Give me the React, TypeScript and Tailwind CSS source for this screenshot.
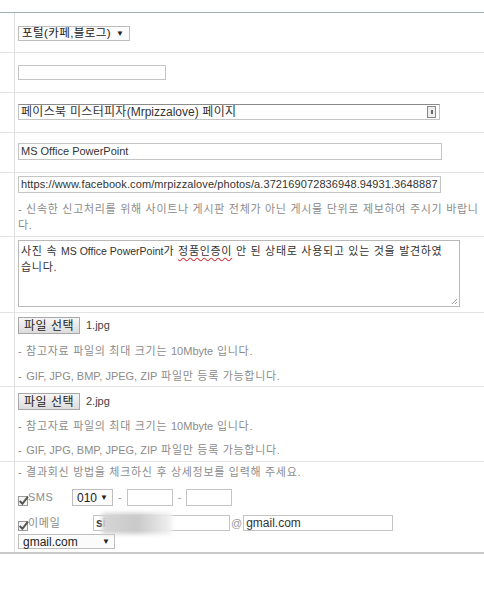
import React from "react";

const font = "font-['Liberation_Sans','Noto_Sans_CJK_KR',sans-serif]";

const Row = ({ h, last, children }: any) => (
  <div className={`flex ${h} ${last ? "" : "border-b border-[#e2e4e4]"}`}>
    <div className="w-[15px] shrink-0 border-r border-[#dcdfdf]" />
    <div className="flex-1 pl-[3px]">{children}</div>
  </div>
);

const Hint = ({ children, className = "" }: any) => (
  <p className={`text-[11px] leading-[16px] tracking-[0.7px] text-[#8c8c8c] ${className}`}>{children}</p>
);

// latin runs keep normal spacing, korean runs are spread a little wider
const L = ({ children, className = "" }: any) => <span className={`tracking-normal ${className}`}>{children}</span>;

const Arrow = () => <span className="text-[8px] leading-none tracking-normal text-[#222]">▼</span>;

const Check = () => (
  <span className="relative inline-block h-[10px] w-[10px] border border-[#9a9a9a] bg-[#f4f4f4]">
    <svg viewBox="0 0 10 10" className="absolute -left-[1px] -top-[2px] h-[11px] w-[11px]">
      <path d="M1.5 5.5 L4 8 L9 1.5" fill="none" stroke="#555" strokeWidth="1.8" />
    </svg>
  </span>
);

const FileButton = ({ name }: any) => (
  <div className="flex items-center gap-[6px]">
    <div className="flex h-[17px] w-[62px] items-center justify-center border border-[#a8a8a8] bg-gradient-to-b from-[#f6f6f6] to-[#dcdcdc] text-[12px] tracking-[0.5px] text-[#222]">
      파일 선택
    </div>
    <span className="text-[11px] text-[#444]">{name}</span>
  </div>
);

const Input = ({ className = "", children }: any) => (
  <div className={`flex items-center border border-[#c4c4c4] bg-white px-[2px] text-[11px] text-[#333] ${className}`}>
    {children}
  </div>
);

export default function App() {
  return (
    <div className={`h-[590px] w-[484px] bg-white ${font}`}>
      <div className="h-[12px]" />
      <div className="border-t border-[#9fb0b0] border-b-2 border-b-[#c8c8c8]">
        <Row h="h-[40px]">
          <div className="pt-[13px]">
            <div className="flex h-[15px] w-[112px] items-center justify-between border border-[#bdbdbd] bg-[#fbfbfb] pl-[3px] pr-[5px] text-[11.5px] tracking-[0.4px] text-[#222]">
              <span>포털(카페,블로그)</span>
              <Arrow />
            </div>
          </div>
        </Row>
        <Row h="h-[40px]">
          <div className="pt-[12px]">
            <Input className="h-[15px] w-[148px]" />
          </div>
        </Row>
        <Row h="h-[40px]">
          <div className="pt-[11px]">
            <Input className="h-[16px] w-[422px] justify-between border-t-[#8a8a8a] text-[12px] tracking-[0.3px]">
              <span>
                페이스북 미스터피자<L>(Mrpizzalove)</L> 페이지
              </span>
              <span className="mr-[1px] flex h-[12px] w-[9px] items-center justify-center border border-[#888] bg-[#eee]">
                <span className="h-[4px] w-[2px] bg-[#666]" />
              </span>
            </Input>
          </div>
        </Row>
        <Row h="h-[40px]">
          <div className="pt-[10px]">
            <Input className="h-[17px] w-[424px] text-[11.5px]">MS Office PowerPoint</Input>
          </div>
        </Row>
        <Row h="h-[64px]">
          <div className="pt-[3px]">
            <Input className="h-[17px] w-[423px] overflow-hidden whitespace-nowrap text-[11px] tracking-[0.1px]">
              https://www.facebook.com/mrpizzalove/photos/a.372169072836948.94931.3648887
            </Input>
            <Hint className="mt-[8px] pr-[2px] leading-[15px]">
              - 신속한 신고처리를 위해 사이트나 게시판 전체가 아닌 게시물 단위로 제보하여 주시기 바랍니다.
            </Hint>
          </div>
        </Row>
        <Row h="h-[76px]">
          <div className="pt-[3px]">
            <div className="relative h-[67px] w-[442px] border border-[#b8b8b8] bg-white px-[2px] pt-[2px] text-[11px] leading-[16px] tracking-[0.7px] text-[#333]">
              <div className="whitespace-nowrap">
                사진 속 <L className="text-[10.5px]">MS Office PowerPoint</L>가{" "}
                <span className="underline decoration-[#d04040] decoration-wavy underline-offset-2">정품인증이</span> 안 된
                상태로 사용되고 있는 것을 발견하였
              </div>
              <div>습니다.</div>
              <svg viewBox="0 0 8 8" className="absolute bottom-[1px] right-[1px] h-[8px] w-[8px]">
                <path d="M7 2 L2 7 M7 5 L5 7" stroke="#999" strokeWidth="1" />
              </svg>
            </div>
          </div>
        </Row>
        <Row h="h-[74px]">
          <div className="pt-[4px]">
            <FileButton name="1.jpg" />
            <Hint className="mt-[9px]">
              - 참고자료 파일의 최대 크기는 <L>10Mbyte</L> 입니다.
            </Hint>
            <Hint className="mt-[9px]">
              - <L>GIF, JPG, BMP, JPEG, ZIP</L> 파일만 등록 가능합니다.
            </Hint>
          </div>
        </Row>
        <Row h="h-[75px]">
          <div className="pt-[6px]">
            <FileButton name="2.jpg" />
            <Hint className="mt-[8px]">
              - 참고자료 파일의 최대 크기는 <L>10Mbyte</L> 입니다.
            </Hint>
            <Hint className="mt-[8px]">
              - <L>GIF, JPG, BMP, JPEG, ZIP</L> 파일만 등록 가능합니다.
            </Hint>
          </div>
        </Row>
        <Row h="h-[90px]" last>
          <div className="pt-[2px]">
            <Hint>- 결과회신 방법을 체크하신 후 상세정보를 입력해 주세요.</Hint>
            <div className="mt-[9px] flex h-[17px] items-center">
              <div className="flex w-[54px] items-end">
                <Check />
                <span className="text-[11px] tracking-[0.5px] text-[#8c8c8c]">SMS</span>
              </div>
              <div className="flex h-[17px] w-[41px] items-center justify-between border border-[#bdbdbd] bg-[#fbfbfb] px-[4px] text-[12px] text-[#222]">
                <span>010</span>
                <Arrow />
              </div>
              <span className="mx-[5px] text-[11px] text-[#999]">-</span>
              <Input className="h-[17px] w-[46px]" />
              <span className="mx-[5px] text-[11px] text-[#999]">-</span>
              <Input className="h-[17px] w-[46px]" />
            </div>
            <div className="mt-[9px] flex h-[16px] items-center">
              <div className="flex w-[75px] items-end">
                <Check />
                <span className="text-[11px] tracking-[0.7px] text-[#8c8c8c]">이메일</span>
              </div>
              <Input className="relative h-[16px] w-[137px] text-[12px] font-bold">
                si
                <span className="absolute -top-[3px] left-[8px] h-[21px] w-[70px] bg-gradient-to-r from-[#d6d6d6] via-[#c9c9c9] to-[#f2f2f2] blur-[2px]" />
              </Input>
              <span className="mx-[1px] text-[11px] text-[#999]">@</span>
              <Input className="h-[16px] w-[150px] text-[12px]">gmail.com</Input>
            </div>
            <div className="mt-[3px] flex h-[15px] w-[97px] items-center justify-between border border-[#bdbdbd] bg-[#fbfbfb] px-[4px] text-[12px] text-[#222]">
              <span>gmail.com</span>
              <Arrow />
            </div>
          </div>
        </Row>
      </div>
    </div>
  );
}
